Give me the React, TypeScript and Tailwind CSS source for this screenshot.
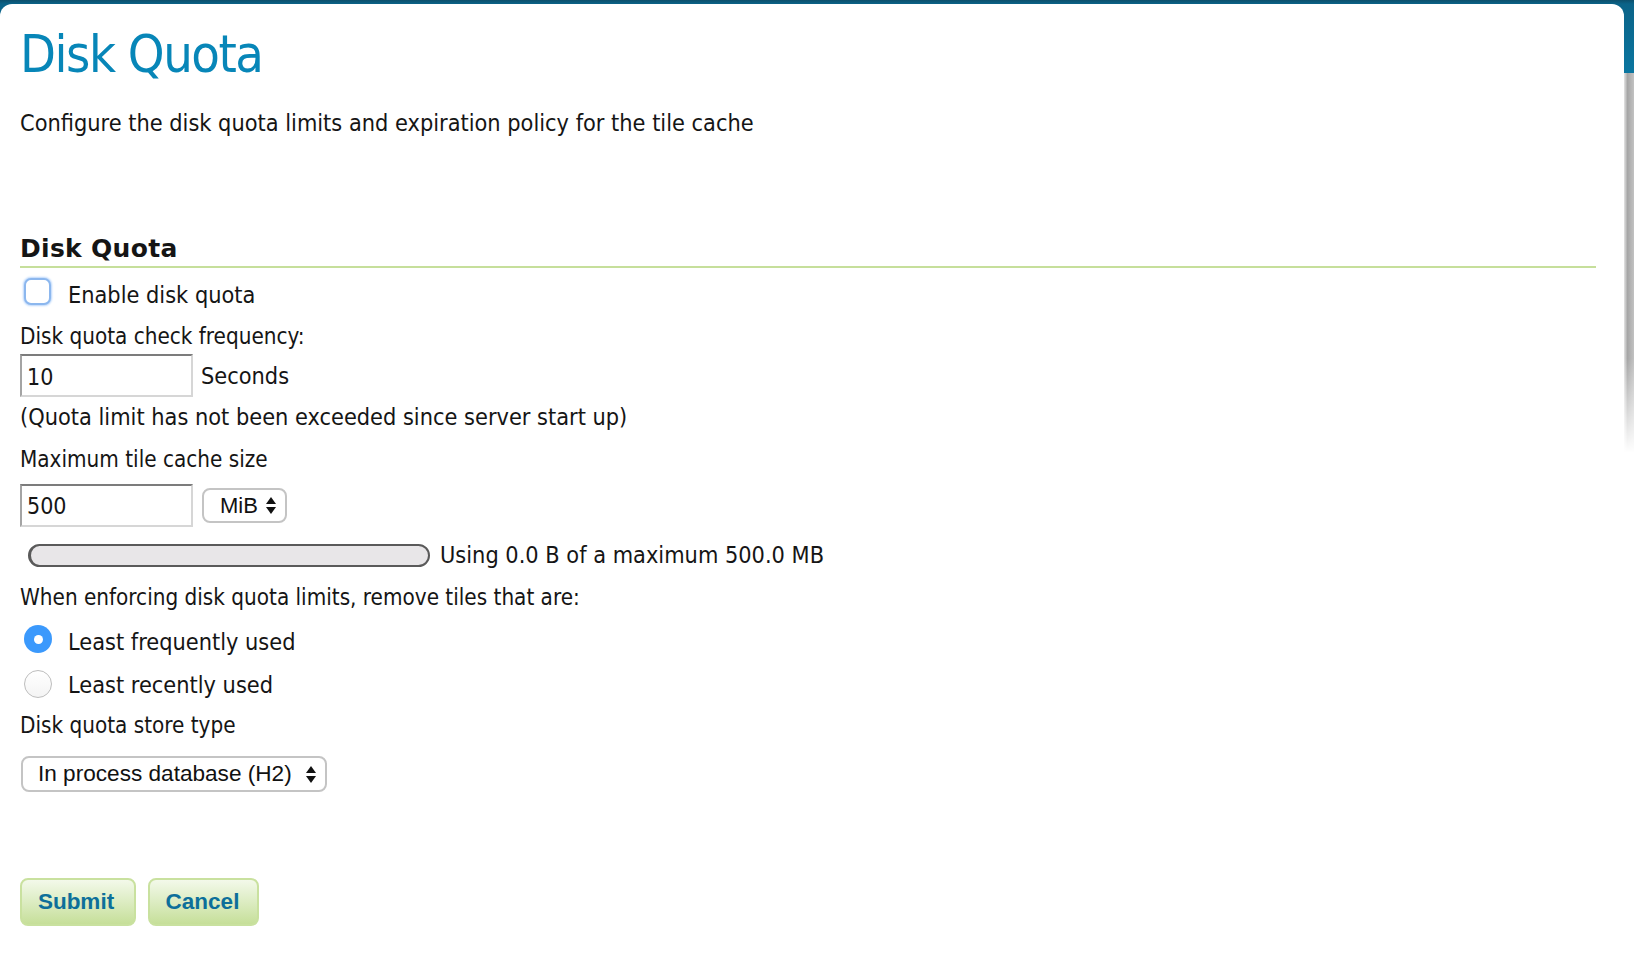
import { useState } from 'react';

function Checkbox({ checked, onChange }: { checked: boolean; onChange: () => void }) {
  return (
    <button
      type="button"
      onClick={onChange}
      className="mt-[-3px] ml-[4px] w-[27px] h-[27px] rounded-[7px] bg-white border-2 border-[#8cb7ee] shadow-[0_0_2px_1px_#b9d6fb] shrink-0"
    >
      {checked && <span className="block text-[#2b7de9] text-[18px] leading-none">✓</span>}
    </button>
  );
}

function Radio({ checked, onClick }: { checked: boolean; onClick: () => void }) {
  return (
    <button
      type="button"
      onClick={onClick}
      className={
        checked
          ? 'ml-[4px] w-[28px] h-[28px] rounded-full bg-[#3b99fc] flex items-center justify-center shrink-0'
          : 'ml-[4px] w-[28px] h-[28px] rounded-full bg-white border border-[#bdbdbd] bg-gradient-to-b from-white to-[#f4f4f4] shrink-0'
      }
    >
      {checked && <span className="w-[9px] h-[9px] rounded-full bg-white" />}
    </button>
  );
}

// up/down arrows as drawn by the native select
function SelectArrows() {
  return (
    <svg width="10" height="17" viewBox="0 0 10 17" className="shrink-0">
      <path d="M5 0 L10 7 L0 7 Z" fill="#111" />
      <path d="M0 10 L10 10 L5 17 Z" fill="#111" />
    </svg>
  );
}

export default function App() {
  const [enabled, setEnabled] = useState(false);
  const [policy, setPolicy] = useState<'lfu' | 'lru'>('lfu');
  const [frequency, setFrequency] = useState('10');
  const [maxSize, setMaxSize] = useState('500');

  return (
    <div className="min-h-screen w-full flex bg-[linear-gradient(to_bottom,#0d4f6c_0px,#0b6388_4px,#0b76a0_73px,#ffffff_73px)] font-['DejaVu_Sans',sans-serif] font-stretch-condensed text-[#151515]">
      {/* Main panel */}
      <div className="flex-1 mt-[4px] bg-white rounded-t-[12px] pl-[20px] pr-[28px] pt-[20px]">
        <h1 className="text-[52px] leading-[60px] tracking-[-1.5px] text-[#0786b8]">Disk Quota</h1>
        <p className="mt-[25px] text-[23.3px] leading-[28px]">
          Configure the disk quota limits and expiration policy for the tile cache
        </p>

        <h2 className="mt-[98px] text-[25px] leading-[28px] font-bold font-stretch-normal tracking-[0.3px] pb-[3px] border-b-2 border-[#c6df9b]">
          Disk Quota
        </h2>

        <div className="text-[23.3px] leading-[28px]">
          <div className="mt-[13px] flex items-start gap-[17px]">
            <Checkbox checked={enabled} onChange={() => setEnabled(!enabled)} />
            <span>Enable disk quota</span>
          </div>

          <div className="mt-[13px] text-[22.3px]">Disk quota check frequency:</div>
          <div className="mt-[4px] flex items-center gap-[8px]">
            <input
              value={frequency}
              onChange={(e) => setFrequency(e.target.value)}
              className="w-[173px] h-[43px] px-[5px] pt-[3px] border-2 border-t-[#7c7c7c] border-l-[#a4a4a4] border-r-[#d6d6d6] border-b-[#d6d6d6] outline-none text-[23px] font-['DejaVu_Sans',sans-serif]"
            />
            <span>Seconds</span>
          </div>
          <div className="mt-[6px]">(Quota limit has not been exceeded since server start up)</div>

          <div className="mt-[14px] text-[22.3px]">Maximum tile cache size</div>
          <div className="mt-[11px] flex items-center gap-[9px]">
            <input
              value={maxSize}
              onChange={(e) => setMaxSize(e.target.value)}
              className="w-[173px] h-[43px] px-[5px] pt-[1px] border-2 border-t-[#7c7c7c] border-l-[#a4a4a4] border-r-[#d6d6d6] border-b-[#d6d6d6] outline-none text-[23px] font-['DejaVu_Sans',sans-serif]"
            />
            <div className="w-[85px] h-[35px] rounded-[8px] border-2 border-[#c4c4c4] bg-white flex items-center pl-[16px] pr-[9px] gap-[8px] font-['Liberation_Sans',sans-serif] font-stretch-normal text-[22px] text-[#111]">
              <span className="flex-1">MiB</span>
              <SelectArrows />
            </div>
          </div>

          <div className="mt-[14px] flex items-center gap-[10px]">
            <div className="ml-[8px] w-[402px] h-[23px] rounded-full border-2 border-[#5a5a5a] border-l-[3px] bg-[#e8e6e8]" />
            <span>Using 0.0 B of a maximum 500.0 MB</span>
          </div>

          <div className="mt-[14px] text-[22.3px]">When enforcing disk quota limits, remove tiles that are:</div>
          <div className="mt-[17px] flex items-start gap-[16px]">
            <span className="mt-[-3px] flex">
              <Radio checked={policy === 'lfu'} onClick={() => setPolicy('lfu')} />
            </span>
            <span>Least frequently used</span>
          </div>
          <div className="mt-[15px] flex items-start gap-[16px]">
            <span className="mt-[-1px] flex">
              <Radio checked={policy === 'lru'} onClick={() => setPolicy('lru')} />
            </span>
            <span>Least recently used</span>
          </div>

          <div className="mt-[12px] text-[22.3px]">Disk quota store type</div>
          <div className="mt-[17px] ml-[1px] w-[306px] h-[36px] rounded-[8px] border-2 border-[#c4c4c4] bg-white flex items-center pl-[15px] pr-[9px] font-['Liberation_Sans',sans-serif] font-stretch-normal text-[22.6px] text-[#111]">
            <span className="flex-1">In process database (H2)</span>
            <SelectArrows />
          </div>

          <div className="mt-[86px] flex gap-[12px]">
            <button
              type="button"
              className="w-[116px] h-[48px] pr-[4px] rounded-[8px] border-2 border-[#c9e19f] bg-gradient-to-b from-[#f3f9ea] to-[#c6df99] font-['Liberation_Sans',sans-serif] font-stretch-normal font-bold text-[22.5px] text-[#0d6f9a]"
            >
              Submit
            </button>
            <button
              type="button"
              className="w-[111px] h-[48px] pr-[2px] rounded-[8px] border-2 border-[#c9e19f] bg-gradient-to-b from-[#f3f9ea] to-[#c6df99] font-['Liberation_Sans',sans-serif] font-stretch-normal font-bold text-[22.5px] text-[#0d6f9a]"
            >
              Cancel
            </button>
          </div>
        </div>
      </div>

      {/* Right gutter shadow */}
      <div className="w-[10px] flex flex-col">
        <div className="h-[73px]" />
        <div className="h-[380px] bg-[linear-gradient(to_right,#e4e4e4,#a6a6a6_35%,#c2c2c2)] [mask-image:linear-gradient(to_bottom,black_75%,transparent)]" />
      </div>
    </div>
  );
}
